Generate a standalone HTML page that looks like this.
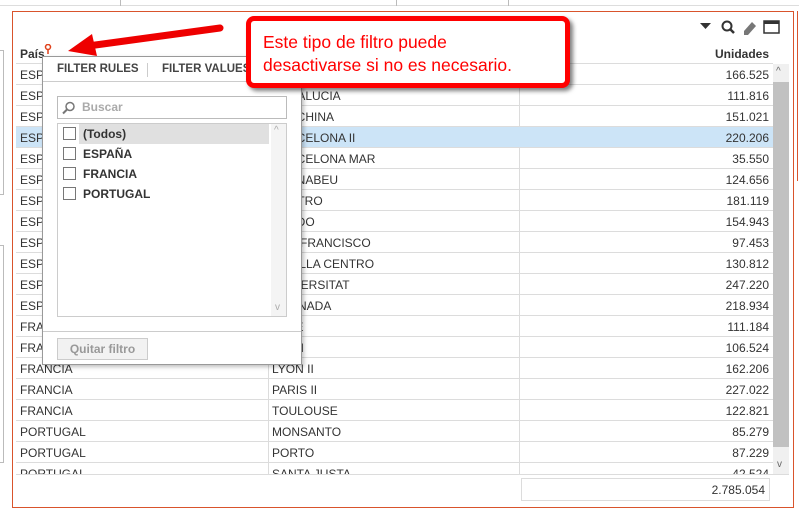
<!DOCTYPE html>
<html><head><meta charset="utf-8"><style>
*{box-sizing:border-box;margin:0;padding:0}
body{width:799px;height:516px;overflow:hidden;background:#fff;font-family:"Liberation Sans",sans-serif;font-size:12px;color:#333;position:relative}
.abs{position:absolute}
.row{position:absolute;left:16px;width:757px;height:21px;border-bottom:1px solid #dcdcdc;line-height:23px}
.row span{position:absolute}
.c1{left:4px}.c2{left:256px}.c3{right:4px}
.sel{background:#cce4f7}
</style></head><body>
<div class="abs" style="left:0;top:0;width:799px;height:6px;border-bottom:1px solid #ddd"></div>
<div class="abs" style="left:120px;top:0;width:1px;height:6px;background:#bbb"></div>
<div class="abs" style="left:396px;top:0;width:1px;height:6px;background:#bbb"></div>
<div class="abs" style="left:508px;top:0;width:1px;height:6px;background:#bbb"></div>
<div class="abs" style="left:0;top:50px;width:4px;height:145px;border:1px solid #bbb;border-left:none"></div>
<div class="abs" style="left:0;top:245px;width:4px;height:218px;border:1px solid #bbb;border-left:none"></div>
<div class="abs" style="left:12px;top:11px;width:782px;height:497px;border:1px solid #d9542c"></div>
<div class="abs" style="left:797px;top:11px;width:1px;height:170px;background:#d9542c"></div>
<svg class="abs" style="left:698px;top:19px" width="84" height="16" viewBox="0 0 84 16">
<path d="M2 4h11l-5.5 6z" fill="#333"/>
<circle cx="29" cy="7" r="4.5" fill="none" stroke="#333" stroke-width="2"/><path d="M32 10l4 4" stroke="#333" stroke-width="2.5"/>
<path d="M46 12l8-9 4 4-8 9h-4z" fill="#777"/>
<rect x="66" y="2" width="15" height="12" fill="none" stroke="#333" stroke-width="1.5"/><rect x="66" y="2" width="15" height="3" fill="#333"/>
</svg>
<div class="abs" style="left:16px;top:43px;width:757px;height:21px;border-bottom:1px solid #dcdcdc;font-weight:bold;line-height:23px">
<span class="abs" style="left:4px">País</span>
<span class="abs" style="right:4px">Unidades</span></div>
<svg class="abs" style="left:44px;top:44px" width="8" height="10"><circle cx="4" cy="3" r="2.5" fill="none" stroke="#e0401a" stroke-width="1.5"/><path d="M4 5v5" stroke="#e0401a" stroke-width="1.5"/></svg>
<div class="abs" style="left:519px;top:64px;width:1px;height:410px;background:#dcdcdc"></div>
<div class="abs" style="left:268px;top:64px;width:1px;height:410px;background:#dcdcdc"></div>
<div class="abs" style="left:16px;top:64px;width:757px;height:410px;overflow:hidden">
<div style="position:relative;left:-16px;top:-64px">
<div class="row" style="top:64px"><span class="c1">ESPAÑA</span><span class="c2">ALCALA</span><span class="c3">166.525</span></div>
<div class="row" style="top:85px"><span class="c1">ESPAÑA</span><span class="c2">ANDALUCIA</span><span class="c3">111.816</span></div>
<div class="row" style="top:106px"><span class="c1">ESPAÑA</span><span class="c2">ARECHINA</span><span class="c3">151.021</span></div>
<div class="row sel" style="top:127px"><span class="c1">ESPAÑA</span><span class="c2">BARCELONA II</span><span class="c3">220.206</span></div>
<div class="row" style="top:148px"><span class="c1">ESPAÑA</span><span class="c2">BARCELONA MAR</span><span class="c3">35.550</span></div>
<div class="row" style="top:169px"><span class="c1">ESPAÑA</span><span class="c2">BERNABEU</span><span class="c3">124.656</span></div>
<div class="row" style="top:190px"><span class="c1">ESPAÑA</span><span class="c2">CENTRO</span><span class="c3">181.119</span></div>
<div class="row" style="top:211px"><span class="c1">ESPAÑA</span><span class="c2">PRADO</span><span class="c3">154.943</span></div>
<div class="row" style="top:232px"><span class="c1">ESPAÑA</span><span class="c2">SAN FRANCISCO</span><span class="c3">97.453</span></div>
<div class="row" style="top:253px"><span class="c1">ESPAÑA</span><span class="c2">SEVILLA CENTRO</span><span class="c3">130.812</span></div>
<div class="row" style="top:274px"><span class="c1">ESPAÑA</span><span class="c2">UNIVERSITAT</span><span class="c3">247.220</span></div>
<div class="row" style="top:295px"><span class="c1">ESPAÑA</span><span class="c2">GRANADA</span><span class="c3">218.934</span></div>
<div class="row" style="top:316px"><span class="c1">FRANCIA</span><span class="c2">LILLE</span><span class="c3">111.184</span></div>
<div class="row" style="top:337px"><span class="c1">FRANCIA</span><span class="c2">LYON</span><span class="c3">106.524</span></div>
<div class="row" style="top:358px"><span class="c1">FRANCIA</span><span class="c2">LYON II</span><span class="c3">162.206</span></div>
<div class="row" style="top:379px"><span class="c1">FRANCIA</span><span class="c2">PARIS II</span><span class="c3">227.022</span></div>
<div class="row" style="top:400px"><span class="c1">FRANCIA</span><span class="c2">TOULOUSE</span><span class="c3">122.821</span></div>
<div class="row" style="top:421px"><span class="c1">PORTUGAL</span><span class="c2">MONSANTO</span><span class="c3">85.279</span></div>
<div class="row" style="top:442px"><span class="c1">PORTUGAL</span><span class="c2">PORTO</span><span class="c3">87.229</span></div>
<div class="row" style="top:463px"><span class="c1">PORTUGAL</span><span class="c2">SANTA JUSTA</span><span class="c3">42.524</span></div>
</div></div>
<div class="abs" style="left:16px;top:474px;width:773px;height:1px;background:#dcdcdc"></div>
<div class="abs" style="left:773px;top:64px;width:16px;height:410px;background:#f0f0f0"></div>
<div class="abs" style="left:773px;top:82px;width:16px;height:365px;background:#c1c1c1"></div>
<div class="abs" style="left:776px;top:66px;font-size:10px;color:#666">^</div>
<div class="abs" style="left:777px;top:459px;font-size:10px;color:#666">v</div>
<div class="abs" style="left:521px;top:478px;width:249px;height:23px;border:1px solid #dcdcdc;text-align:right;padding-right:4px;line-height:23px">2.785.054</div>
<div class="abs" style="left:42px;top:56px;width:260px;height:309px;background:#fff;border:1px solid #999;box-shadow:2px 2px 4px rgba(0,0,0,.25)">
<div class="abs" style="left:0;top:0;width:258px;height:25px;border-bottom:1px solid #ccc;font-weight:bold;line-height:25px;color:#444;font-size:11.5px">
<span class="abs" style="left:14px">FILTER RULES</span>
<span class="abs" style="left:104px;top:6px;width:1px;height:14px;background:#ccc"></span>
<span class="abs" style="left:119px">FILTER VALUES</span></div>
<div class="abs" style="left:14px;top:39px;width:230px;height:23px;border:1px solid #bbb;color:#aaa;line-height:21px;padding-left:24px;font-weight:bold">Buscar</div>
<svg class="abs" style="left:19px;top:44px" width="14" height="14"><circle cx="8" cy="5.5" r="4" fill="none" stroke="#777" stroke-width="1.5"/><path d="M5 8.5l-4 4" stroke="#777" stroke-width="2"/></svg>
<div class="abs" style="left:14px;top:66px;width:230px;height:194px;border:1px solid #ccc"></div>
<div class="abs" style="left:36px;top:67px;width:190px;height:20px;background:#e0e0e0"></div>
<div class="abs" style="left:228px;top:67px;width:15px;height:192px;background:#f4f4f4"></div>
<div class="abs" style="left:231px;top:68px;font-size:10px;color:#aaa">^</div>
<div class="abs" style="left:232px;top:245px;font-size:10px;color:#aaa">v</div>
<div class="abs" style="left:20px;top:67px;font-weight:bold;line-height:20px">
<div style="height:20px"><span style="display:inline-block;width:13px;height:13px;border:1px solid #777;vertical-align:-2px;margin-right:7px"></span>(Todos)</div>
<div style="height:20px"><span style="display:inline-block;width:13px;height:13px;border:1px solid #777;vertical-align:-2px;margin-right:7px"></span>ESPAÑA</div>
<div style="height:20px"><span style="display:inline-block;width:13px;height:13px;border:1px solid #777;vertical-align:-2px;margin-right:7px"></span>FRANCIA</div>
<div style="height:20px"><span style="display:inline-block;width:13px;height:13px;border:1px solid #777;vertical-align:-2px;margin-right:7px"></span>PORTUGAL</div>
</div>
<div class="abs" style="left:0;top:274px;width:258px;height:1px;background:#ccc"></div>
<div class="abs" style="left:14px;top:281px;width:91px;height:22px;border:1px solid #ccc;background:#f2f2f2;color:#999;font-weight:bold;text-align:center;line-height:20px">Quitar filtro</div>
</div>
<div class="abs" style="left:246px;top:16px;width:324px;height:72px;border:5px solid #f00;border-radius:8px;background:#fff;box-shadow:3px 3px 4px rgba(0,0,0,.5);color:#f00;font-size:17.5px;line-height:23px;padding:10px 0 0 12px">Este tipo de filtro puede<br>desactivarse si no es necesario.</div>
<svg class="abs" style="left:60px;top:20px" width="180" height="40"><path d="M160 8L28 26" stroke="#e00" stroke-width="7" stroke-linecap="round"/><path d="M8 31L32 14 37 36z" fill="#e00"/></svg>
</body></html>
